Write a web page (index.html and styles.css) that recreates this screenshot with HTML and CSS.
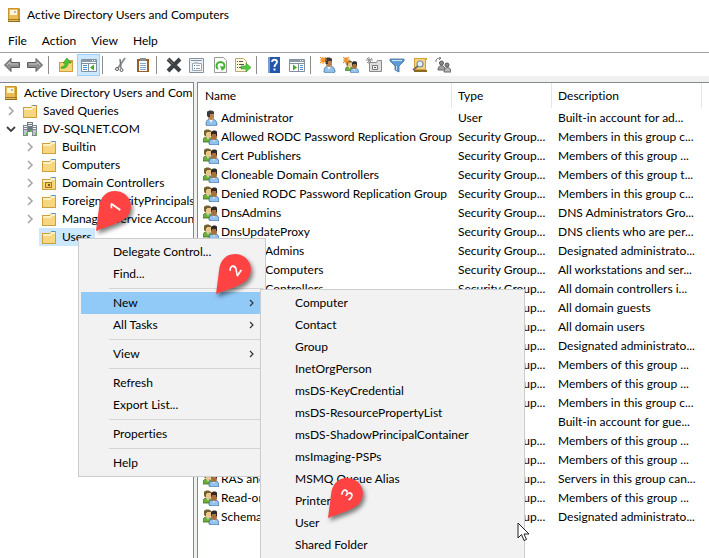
FILE: index.html
```html
<!DOCTYPE html>
<html lang="en">
<head>
    <meta charset="UTF-8"/>
    <meta name="viewport" content="width=device-width, initial-scale=1.0"/>
    <title>Active Directory Users and Computers</title>
    <link rel="stylesheet" href="styles.css">
</head>
<body>
<svg class="sprite" aria-hidden="true">
    <symbol id="i-app" viewBox="0 0 16 16">
        <path d="M2 1h11l1 1v13H2z" fill="#c9962c"/>
        <path d="M3 2h9v12H3z" fill="#e9bc55"/>
        <path d="M4 3h7v5H4z" fill="#fff6d8"/>
        <path d="M8 4h2v2H8z" fill="#b9b9a8"/>
        <path d="M2 12h12v1H2z" fill="#a37a20"/>
        <path d="M2 14h12v1H2z" fill="#8a6a24"/>
    </symbol>
    <symbol id="i-folder" viewBox="0 0 16 16">
        <path d="M1 4h8l1-2h5v13H1z" fill="#cfa03a"/>
        <path d="M2 5h12v9H2z" fill="#f6d67e"/>
        <path d="M2 5h7l1-2h4v2h-3l-1 2H2z" fill="#fdf0c4"/>
        <path d="M11 2h3v1h-3z" fill="#4f8fd0"/>
    </symbol>
    <symbol id="i-ou" viewBox="0 0 16 16">
        <use href="#i-folder"/>
        <path d="M4 7h7v6H4z" fill="#a5761c"/>
        <path d="M5 8h5v4H5z" fill="#f0c860"/>
        <path d="M7 9h2v2H7z" fill="#7a540c"/>
    </symbol>
    <symbol id="i-domain" viewBox="0 0 16 16">
        <path d="M5 1h6v10H5z" fill="#6f7a83"/>
        <path d="M6 2h4v1H6zM6 4h4v1H6z" fill="#e6ebef"/>
        <path d="M1 4h5v11H1zM10 4h5v11h-5z" fill="#7d8891"/>
        <path d="M2 5h3v1H2zM2 7h3v1H2zM11 5h3v1h-3zM11 7h3v1h-3z" fill="#f0f3f5"/>
        <path d="M2 9h3v5H2zM11 9h3v5h-3z" fill="#bcc5cc"/>
        <path d="M4 12h2v2H4zM13 12h2v2h-2zM8 9h2v2H8z" fill="#54c33c"/>
    </symbol>
    <symbol id="i-right" viewBox="0 0 16 16">
        <path d="M6 4l4 4-4 4" fill="none" stroke="#a6a6a6" stroke-width="1.6"/>
    </symbol>
    <symbol id="i-down" viewBox="0 0 16 16">
        <path d="M4 6l4 4 4-4" fill="none" stroke="#404040" stroke-width="1.8"/>
    </symbol>
    <symbol id="i-more" viewBox="0 0 8 10">
        <path d="M3 2l3 3-3 3" fill="none" stroke="#333" stroke-width="1.2"/>
    </symbol>
    <symbol id="i-user" viewBox="0 0 16 16">
        <path d="M3 15c0-4 1-6 5-6s6 2 6 6l-2 1H5z" fill="#8fc0ec" stroke="#34628f" stroke-width=".7"/>
        <path d="M6 9l2 4 2-4z" fill="#f4f8fc"/>
        <path d="M5 3h6v4c0 2-1 3-3 3S5 9 5 7z" fill="#b98250"/>
        <path d="M4 6V2c1-2 6-2 7 0v2H7v3H5z" fill="#3b3b3b"/>
    </symbol>
    <symbol id="i-group" viewBox="0 0 16 16">
        <path d="M0 13c0-4 1-5 4-5s5 1 5 5z" fill="#6fae3d" stroke="#3b6a1c" stroke-width=".8"/>
        <path d="M4 8l1 3 1-3z" fill="#fff"/>
        <path d="M2 2h6v4c0 2-1 3-3 3S2 8 2 6z" fill="#e8c68c"/>
        <path d="M1 6V2c1-2 6-2 7 0v1H4v1H3v3H2z" fill="#75602f"/>
        <path d="M6 15c0-4 1-5 5-5s5 2 5 5l-1 1H8z" fill="#94c3ef" stroke="#34628f" stroke-width=".8"/>
        <path d="M10 10l1 3 1-3z" fill="#fff"/>
        <path d="M8 4h6v4c0 2-1 3-3 3S8 10 8 8z" fill="#a8703c"/>
        <path d="M8 6V3c1-2 6-2 6 0v4h-1V5H9v2z" fill="#2e2a28"/>
    </symbol>
    <symbol id="i-back" viewBox="0 0 16 16">
        <path d="M.5 8L7 1.500v4h8.500v5H7v4z" fill="#8f8f8f" stroke="#5c5c5c"/>
        <path d="M3 8l3-3v2h8" fill="none" stroke="#c4c4c4"/>
    </symbol>
    <symbol id="i-forward" viewBox="0 0 16 16">
        <path d="M15.500 8L9 1.500v4H.5v5H9v4z" fill="#8f8f8f" stroke="#5c5c5c"/>
        <path d="M2 7h8V5l3 3" fill="none" stroke="#c4c4c4"/>
    </symbol>
    <symbol id="i-up" viewBox="0 0 16 16">
        <path d="M1 5h8l1-2h5v12H1z" fill="#cfa03a"/>
        <path d="M2 6h12v8H2z" fill="#f6d67c"/>
        <path d="M3 10c3 0 4-2 4-4H5l4-5 4 5h-3c0 4-3 6-7 5z" fill="#4cc42e" stroke="#2f8a1b" stroke-width=".6"/>
    </symbol>
    <symbol id="i-tree" viewBox="0 0 16 16">
        <path d="M.5 2.500h15v12H.5z" fill="#fff" stroke="#8291a0"/>
        <path d="M1 3h14v2H1z" fill="#8d9aa8"/>
        <path d="M11 3h1v1h-1zM13 3h1v1h-1z" fill="#fff"/>
        <path d="M1 6.500h14M7.500 6v9" stroke="#8291a0" fill="none"/>
        <path d="M2 8h4v1H2zM2 10h4v1H2zM2 12h4v1H2z" fill="#4d8fd0"/>
        <path d="M9 10.500l4-3v6z" fill="#3aad27"/>
    </symbol>
    <symbol id="i-cut" viewBox="0 0 16 16">
        <path d="M13 1L6 11" fill="none" stroke="#8d9296" stroke-width="2"/>
        <path d="M8 2l1 9" fill="none" stroke="#74797d" stroke-width="1.500"/>
        <circle cx="5" cy="12" r="1.500" fill="none" stroke="#555"/>
        <circle cx="9.500" cy="13" r="1.500" fill="none" stroke="#555"/>
    </symbol>
    <symbol id="i-paste" viewBox="0 0 16 16">
        <path d="M2 2h12v13H2z" fill="#9a5f24"/>
        <path d="M4 4h8v10H4z" fill="#f7fbff"/>
        <path d="M5 1h6v3H5z" fill="#8a8f96"/>
        <path d="M5 6h6v1H5zM5 8h6v1H5zM5 10h6v1H5zM5 12h6v1H5z" fill="#85a9cf"/>
    </symbol>
    <symbol id="i-delete" viewBox="0 0 16 16">
        <path d="M2 2l12 12M14 2L2 14" stroke="#3f4245" stroke-width="4"/>
        <path d="M2 2l5 5" stroke="#777" stroke-width="1"/>
    </symbol>
    <symbol id="i-props" viewBox="0 0 16 16">
        <path d="M.5 1.500h14v14H.5z" fill="#eef2f6" stroke="#8593a0"/>
        <path d="M2 3h11v1H2z" fill="#8593a0"/>
        <path d="M3.500 6.500h9v7h-9z" fill="#fff" stroke="#9aa7b3"/>
        <path d="M5 5h4v2H5z" fill="#b8c2cb"/>
        <path d="M5 8h1v1H5zM5 11h1v1H5z" fill="#3f7fc0"/>
        <path d="M7 8h4v1H7zM7 11h4v1H7z" fill="#9aa7b3"/>
    </symbol>
    <symbol id="i-refresh" viewBox="0 0 16 16">
        <path d="M2.500 .5h9l3 3v12h-12z" fill="#fdfdfd" stroke="#9a9a9a"/>
        <path d="M6 12a4 4 0 1 1 5 0" fill="none" stroke="#3fb52b" stroke-width="2"/>
        <path d="M8 9l5 1-3 4z" fill="#3fb52b"/>
    </symbol>
    <symbol id="i-export" viewBox="0 0 16 16">
        <path d="M.5 1.500h8l3 3v10H.5z" fill="#fff8dc" stroke="#b8a878"/>
        <path d="M2 4h1v1H2zM4 4h4v1H4zM2 7h1v1H2zM4 7h5v1H4zM2 10h1v1H2zM4 10h3v1H4z" fill="#555"/>
        <path d="M6 9h5V6l5 4.500-5 4.500v-3H6z" fill="#55c940" stroke="#379a26" stroke-width=".6"/>
    </symbol>
    <symbol id="i-help" viewBox="0 0 16 16">
        <path d="M2 0h12v16H2z" fill="#2456ad"/>
        <path d="M2 0h2v16H2z" fill="#7f9dcb"/>
        <path d="M6 5c0-3 5-3 5 0 0 2-2.500 2-2.500 5" fill="none" stroke="#fff" stroke-width="1.800"/>
        <path d="M7.500 11.500h2v2h-2z" fill="#fff"/>
    </symbol>
    <symbol id="i-console" viewBox="0 0 16 16">
        <path d="M.5 2.500h15v12H.5z" fill="#fff" stroke="#8291a0"/>
        <path d="M1 3h14v2H1z" fill="#8d9aa8"/>
        <path d="M11 3h1v1h-1zM13 3h1v1h-1z" fill="#fff"/>
        <path d="M1 6.500h14M9.500 6v9" stroke="#8291a0" fill="none"/>
        <path d="M11 8h3v1h-3zM11 10h3v1h-3zM11 12h3v1h-3z" fill="#4d8fd0"/>
        <path d="M8 10.500l-4-3v6z" fill="#3aad27"/>
    </symbol>
    <symbol id="i-star" viewBox="0 0 16 16">
        <path d="M4 0v8M0 4h8M1 1l6 6M7 1L1 7" stroke="#f09028" stroke-width="1.200"/>
    </symbol>
    <symbol id="i-newuser" viewBox="0 0 16 16">
        <use href="#i-user" x="1" y="0" width="16" height="16"/>
        <use href="#i-star" x="-1" y="-1" width="16" height="16"/>
    </symbol>
    <symbol id="i-newgroup" viewBox="0 0 16 16">
        <use href="#i-group" x="2" y="3" width="14" height="13"/>
        <use href="#i-star" x="-1" y="-1" width="16" height="16"/>
    </symbol>
    <symbol id="i-newou" viewBox="0 0 16 16">
        <path d="M3.500 5.500h7l1-2h4v11h-12z" fill="#dedede" stroke="#8a8a8a"/>
        <path d="M6.500 8.500h5v4h-5z" fill="#f5f5f5" stroke="#777"/>
        <path d="M8 10h2v1H8z" fill="#555"/>
        <path d="M3 0v7M0 3h7M1 1l5 5M6 1L1 6" stroke="#8c8c8c"/>
    </symbol>
    <symbol id="i-filter" viewBox="0 0 16 16">
        <path d="M1 2h14v2l-5 5v6l-4-2V9L1 4z" fill="#5f9bd2" stroke="#3f6f9f" stroke-width=".8"/>
        <path d="M3 3h10v1H3z" fill="#d5e7f7"/>
        <path d="M7 9h1v4H7z" fill="#b9d6f0"/>
    </symbol>
    <symbol id="i-find" viewBox="0 0 16 16">
        <path d="M2 1h13v2h-1v10h1v2H2z" fill="#d3a23a"/>
        <path d="M3 2h10v10H3z" fill="#f4d27c"/>
        <path d="M2 13h13v2H2z" fill="#8b6b1f"/>
        <circle cx="8" cy="7" r="3" fill="#e4f1fb" stroke="#7a8fa3" stroke-width="1.200"/>
        <path d="M6 9l-5 4" stroke="#6f6f6f" stroke-width="1.800"/>
    </symbol>
    <symbol id="i-addto" viewBox="0 0 16 16">
        <path d="M1 5V3q1-2 4-2M4 0l2 1-2 2" fill="none" stroke="#777"/>
        <path d="M3 13c0-6 7-6 7 0z" fill="#9f9f9f" stroke="#666"/>
        <circle cx="6.500" cy="6" r="2" fill="#8a8a8a" stroke="#555"/>
        <path d="M9 15c0-6 7-6 7 0z" fill="#b8b8b8" stroke="#666"/>
        <circle cx="12" cy="8" r="2" fill="#8a8a8a" stroke="#555"/>
    </symbol>
    <symbol id="i-pin" viewBox="0 0 38 44">
        <path d="M2 42L5 19C6 8 12 2 21 2a15.500 15.500 0 0 1 8 29C23 35 12 38 2 42z" fill="#ff4343"/>
    </symbol>
</svg>

<div class="window">
    <header class="titlebar">
        <svg class="icon"><use href="#i-app"/></svg>
        <h1>Active Directory Users and Computers</h1>
    </header>

    <nav class="menubar">
        <button>File</button>
        <button>Action</button>
        <button>View</button>
        <button>Help</button>
    </nav>

    <div class="toolbar">
        <button aria-label="Back"><svg class="icon"><use href="#i-back"/></svg></button>
        <button aria-label="Forward"><svg class="icon"><use href="#i-forward"/></svg></button>
        <span class="divider"></span>
        <button aria-label="Up one level"><svg class="icon"><use href="#i-up"/></svg></button>
        <button aria-label="Show console tree" class="pressed"><svg class="icon"><use href="#i-tree"/></svg></button>
        <span class="divider"></span>
        <button aria-label="Cut"><svg class="icon"><use href="#i-cut"/></svg></button>
        <button aria-label="Paste"><svg class="icon"><use href="#i-paste"/></svg></button>
        <span class="divider"></span>
        <button aria-label="Delete"><svg class="icon"><use href="#i-delete"/></svg></button>
        <button aria-label="Properties"><svg class="icon"><use href="#i-props"/></svg></button>
        <button aria-label="Refresh"><svg class="icon"><use href="#i-refresh"/></svg></button>
        <button aria-label="Export list"><svg class="icon"><use href="#i-export"/></svg></button>
        <span class="divider"></span>
        <button aria-label="Help"><svg class="icon"><use href="#i-help"/></svg></button>
        <button aria-label="Show action pane"><svg class="icon"><use href="#i-console"/></svg></button>
        <span class="divider"></span>
        <button aria-label="New user"><svg class="icon"><use href="#i-newuser"/></svg></button>
        <button aria-label="New group"><svg class="icon"><use href="#i-newgroup"/></svg></button>
        <button aria-label="New organizational unit"><svg class="icon"><use href="#i-newou"/></svg></button>
        <button aria-label="Filter"><svg class="icon"><use href="#i-filter"/></svg></button>
        <button aria-label="Find"><svg class="icon"><use href="#i-find"/></svg></button>
        <button aria-label="Add to group"><svg class="icon"><use href="#i-addto"/></svg></button>
    </div>

    <main class="panes">
        <aside class="tree">
            <div class="node"><svg class="icon"><use href="#i-app"/></svg><span>Active Directory Users and Computers</span></div>
            <ul>
                <li><div class="node"><svg class="icon arrow"><use href="#i-right"/></svg><svg class="icon"><use href="#i-folder"/></svg><span>Saved Queries</span></div></li>
                <li>
                    <div class="node"><svg class="icon arrow"><use href="#i-down"/></svg><svg class="icon"><use href="#i-domain"/></svg><span>DV-SQLNET.COM</span></div>
                    <ul>
                        <li><div class="node"><svg class="icon arrow"><use href="#i-right"/></svg><svg class="icon"><use href="#i-folder"/></svg><span>Builtin</span></div></li>
                        <li><div class="node"><svg class="icon arrow"><use href="#i-right"/></svg><svg class="icon"><use href="#i-folder"/></svg><span>Computers</span></div></li>
                        <li><div class="node"><svg class="icon arrow"><use href="#i-right"/></svg><svg class="icon"><use href="#i-ou"/></svg><span>Domain Controllers</span></div></li>
                        <li><div class="node"><svg class="icon arrow"><use href="#i-right"/></svg><svg class="icon"><use href="#i-folder"/></svg><span>ForeignSecurityPrincipals</span></div></li>
                        <li><div class="node"><svg class="icon arrow"><use href="#i-right"/></svg><svg class="icon"><use href="#i-folder"/></svg><span>Managed Service Accounts</span></div></li>
                        <li><div class="node leaf selected"><svg class="icon"><use href="#i-folder"/></svg><span>Users</span></div></li>
                    </ul>
                </li>
            </ul>
        </aside>

        <section class="list">
            <table>
                <colgroup><col class="col-name"><col class="col-type"><col class="col-desc"><col></colgroup>
                <thead>
                    <tr><th>Name</th><th>Type</th><th>Description</th><th></th></tr>
                </thead>
                <tbody id="rows"></tbody>
            </table>
        </section>
    </main>

    <div class="menu context">
        <button>Delegate Control...</button>
        <button>Find...</button>
        <hr>
        <button class="active">New<svg class="more"><use href="#i-more"/></svg></button>
        <button>All Tasks<svg class="more"><use href="#i-more"/></svg></button>
        <hr>
        <button>View<svg class="more"><use href="#i-more"/></svg></button>
        <hr>
        <button>Refresh</button>
        <button>Export List...</button>
        <hr>
        <button>Properties</button>
        <hr>
        <button>Help</button>
    </div>

    <div class="menu submenu">
        <button>Computer</button>
        <button>Contact</button>
        <button>Group</button>
        <button>InetOrgPerson</button>
        <button>msDS-KeyCredential</button>
        <button>msDS-ResourcePropertyList</button>
        <button>msDS-ShadowPrincipalContainer</button>
        <button>msImaging-PSPs</button>
        <button>MSMQ Queue Alias</button>
        <button>Printer</button>
        <button>User</button>
        <button>Shared Folder</button>
    </div>

    <div class="pin pin-1"><svg><use href="#i-pin"/></svg><span>1</span></div>
    <div class="pin pin-2"><svg><use href="#i-pin"/></svg><span>2</span></div>
    <div class="pin pin-3"><svg><use href="#i-pin"/></svg><span>3</span></div>

    <svg class="cursor" viewBox="0 0 13 20">
        <path d="M1 1v15l3.500-3.500 2.500 6 2.500-1-2.500-5.500h5z" fill="#fff" stroke="#222"/>
    </svg>
</div>

<script>
    const rows = [
        ["user", "Administrator", "Built-in account for ad..."],
        ["group", "Allowed RODC Password Replication Group", "Members in this group c..."],
        ["group", "Cert Publishers", "Members of this group ..."],
        ["group", "Cloneable Domain Controllers", "Members of this group t..."],
        ["group", "Denied RODC Password Replication Group", "Members in this group c..."],
        ["group", "DnsAdmins", "DNS Administrators Gro..."],
        ["group", "DnsUpdateProxy", "DNS clients who are per..."],
        ["group", "Domain Admins", "Designated administrato..."],
        ["group", "Domain Computers", "All workstations and ser..."],
        ["group", "Domain Controllers", "All domain controllers i..."],
        ["group", "Domain Guests", "All domain guests"],
        ["group", "Domain Users", "All domain users"],
        ["group", "Enterprise Admins", "Designated administrato..."],
        ["group", "Enterprise Key Admins", "Members of this group ..."],
        ["group", "Enterprise Read-only Domain Controllers", "Members of this group ..."],
        ["group", "Group Policy Creator Owners", "Members in this group c..."],
        ["user", "Guest", "Built-in account for gue..."],
        ["group", "Key Admins", "Members of this group ..."],
        ["group", "Protected Users", "Members of this group ..."],
        ["group", "RAS and IAS Servers", "Servers in this group can..."],
        ["group", "Read-only Domain Controllers", "Members of this group ..."],
        ["group", "Schema Admins", "Designated administrato..."]
    ];

    document.getElementById("rows").innerHTML = rows.map(([kind, name, text]) => `
        <tr>
            <td><div class="cell"><svg class="icon"><use href="#i-${kind}"/></svg>${name}</div></td>
            <td>${kind === "user" ? "User" : "Security Group..."}</td>
            <td>${text}</td>
            <td></td>
        </tr>`).join("");
</script>
</body>
</html>
```
FILE: styles.css
```css
:root {
    --face: #f0f0f0;
    --edge: #828790;
    --menu: #f2f2f2;
    --menu-edge: #ccc;
}

* {
    box-sizing: border-box;
}

body {
    margin: 0;
    background: white;
    color: black;
    font-family: Lato, "Open Sans", sans-serif;
    font-size: 12px;
    line-height: 18px;
    font-variant-ligatures: none;
}

button {
    margin: 0;
    padding: 0;
    border: none;
    background: none;
    color: inherit;
    font: inherit;
    font-variant-ligatures: none;
}

.sprite {
    position: absolute;
    width: 0;
    height: 0;
}

.icon {
    display: block;
    flex: none;
    width: 16px;
    height: 16px;
}

.window {
    position: relative;
    display: flex;
    flex-direction: column;
    height: 100vh;
    overflow: hidden;
}

.titlebar {
    display: flex;
    align-items: center;
    gap: 5px;
    height: 30px;
    padding-left: 6px;
}

.titlebar h1 {
    margin: 0;
    font-size: 12px;
    font-weight: normal;
}

.menubar {
    display: flex;
    gap: 15px;
    height: 22px;
    padding-left: 8px;
}

.toolbar {
    display: flex;
    align-items: center;
    height: 24px;
    border-top: 1px solid #a0a0a0;
}

.toolbar button {
    display: grid;
    place-items: center;
    width: 23px;
    height: 22px;
}

.toolbar .pressed {
    background: #cce8ff;
    border: 1px solid #99d1ff;
}

.divider {
    width: 1px;
    height: 18px;
    margin: 0 5px 0 2px;
    background: #8d8d8d;
}

.panes {
    display: flex;
    flex: 1;
    gap: 3px;
    min-height: 0;
    padding-top: 6px;
    background: var(--face);
}

.tree {
    flex: none;
    width: 194px;
    padding-top: 1px;
    overflow: hidden;
    background: white;
    border: solid var(--edge);
    border-width: 1px 1px 0 0;
    white-space: nowrap;
}

.tree ul {
    margin: 0;
    padding: 0;
    list-style: none;
}

.tree ul ul {
    padding-left: 19px;
}

.node {
    display: flex;
    align-items: center;
    height: 18px;
    padding-left: 3px;
}

.node span {
    padding: 0 3px 0 5px;
}

.node .arrow {
    margin-right: 3px;
}

.leaf {
    width: max-content;
    margin-left: 20px;
    padding-left: 2px;
}

.selected {
    background: #cce8ff;
}

.list {
    flex: 1;
    min-width: 0;
    overflow: hidden;
    background: white;
    border: solid var(--edge);
    border-width: 1px 0 0 1px;
}

table {
    width: 100%;
    table-layout: fixed;
    border-collapse: separate;
    border-spacing: 0;
}

.col-name {
    width: 254px;
}

.col-type {
    width: 100px;
}

.col-desc {
    width: 150px;
}

th, td {
    padding: 0 0 0 6px;
    text-align: left;
    font-weight: normal;
    white-space: nowrap;
    overflow: hidden;
}

th {
    height: 25px;
    border-right: 1px solid #e5e5e5;
}

th:first-child {
    padding-left: 7px;
}

th:last-child {
    border-right: none;
}

td {
    height: 19px;
}

.cell {
    display: flex;
    align-items: center;
    gap: 2px;
}

td:first-child {
    padding-left: 5px;
}

.menu {
    position: absolute;
    padding: 2px;
    background: var(--menu);
    border: 1px solid var(--menu-edge);
}

.menu button {
    display: flex;
    align-items: center;
    justify-content: space-between;
    width: 100%;
    height: 22px;
    padding: 0 8px 0 32px;
    text-align: left;
}

.menu hr {
    height: 1px;
    margin: 3px 0 3px 28px;
    border: none;
    background: #d4d4d4;
}

.menu .active {
    background: #91c9f7;
}

.more {
    width: 8px;
    height: 10px;
}

.context {
    top: 238px;
    left: 78px;
    width: 188px;
}

.submenu {
    top: 289px;
    bottom: -30px;
    left: 260px;
    width: 265px;
}

.pin {
    position: absolute;
    width: 38px;
    height: 44px;
    color: white;
    filter: drop-shadow(2px 3px 2px rgba(0, 0, 0, 0.5));
}

.pin svg {
    display: block;
    width: 38px;
    height: 44px;
}

.pin span {
    position: absolute;
    top: 8px;
    left: 11px;
    width: 20px;
    font-family: "Open Sans", sans-serif;
    font-size: 16px;
    font-weight: 600;
    line-height: 20px;
    text-align: center;
    transform: rotate(-55deg);
}

.pin-1 {
    top: 189px;
    left: 94px;
}

.pin-2 {
    top: 252px;
    left: 214px;
}

.pin-3 {
    top: 476px;
    left: 326px;
}

.cursor {
    position: absolute;
    top: 522px;
    left: 517px;
    width: 13px;
    height: 20px;
}
```
